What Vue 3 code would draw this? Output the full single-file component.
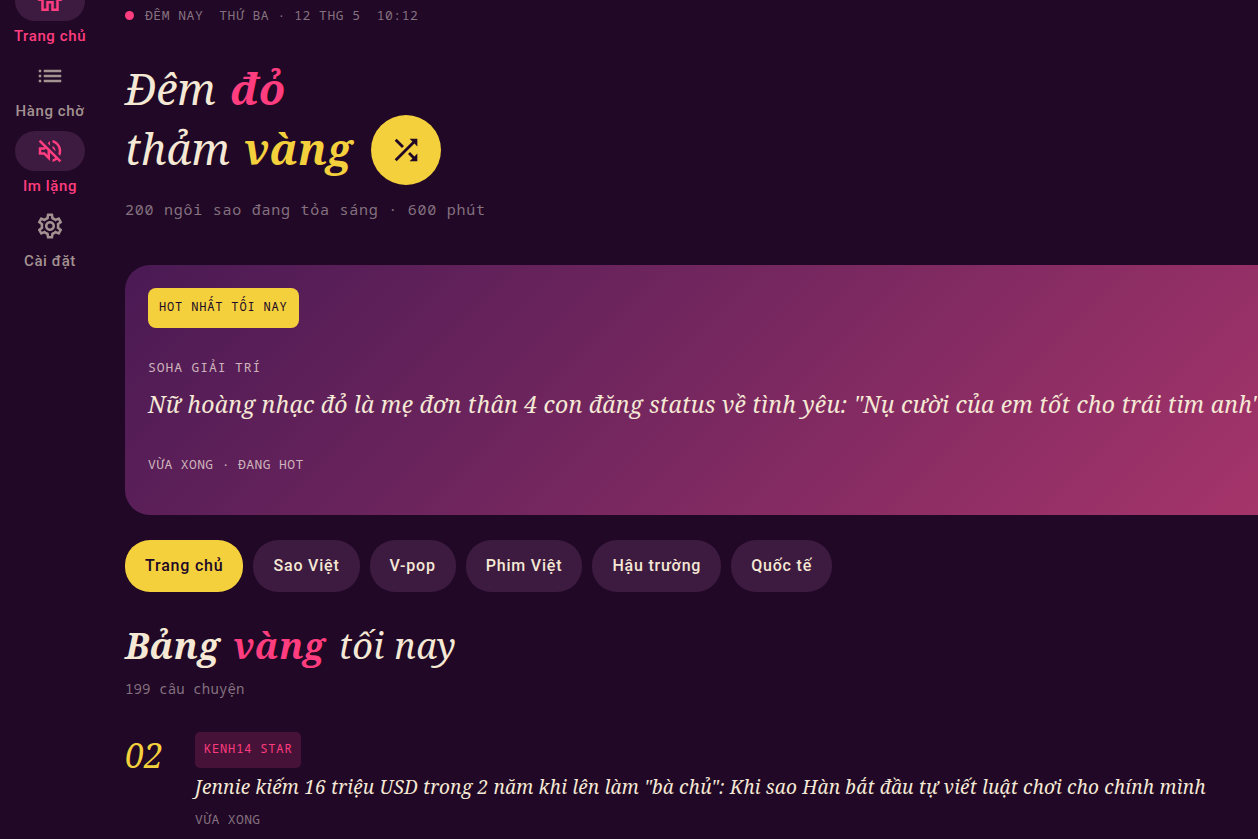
<template>
  <div class="app">
    <nav class="rail" aria-label="Điều hướng">
      <button
        v-for="item in navItems"
        :key="item.label"
        type="button"
        class="rail-item"
        :class="{ active: item.active }"
      >
        <span class="rail-icon">
          <svg viewBox="0 0 24 24" aria-hidden="true"><path :d="item.icon" /></svg>
        </span>
        <span class="rail-label">{{ item.label }}</span>
      </button>
    </nav>

    <main class="content">
      <div class="status">
        <span class="dot"></span>
        <span>ĐÊM NAY</span>
        <span>THỨ BA · 12 THG 5</span>
        <span>10:12</span>
      </div>

      <header class="hero">
        <h1>
          <span class="hero-line">Đêm <b class="pink">đỏ</b></span>
          <span class="hero-line">thảm <b class="gold">vàng</b></span>
        </h1>
        <button type="button" class="shuffle" aria-label="Phát ngẫu nhiên">
          <svg viewBox="0 0 24 24" aria-hidden="true"><path :d="icons.shuffle" /></svg>
        </button>
      </header>
      <p class="summary">200 ngôi sao đang tỏa sáng · 600 phút</p>

      <article class="feature">
        <span class="badge">HOT NHẤT TỐI NAY</span>
        <span class="source">SOHA GIẢI TRÍ</span>
        <h2>Nữ hoàng nhạc đỏ là mẹ đơn thân 4 con đăng status về tình yêu: "Nụ cười của em tốt cho trái tim anh"</h2>
        <span class="time">VỪA XONG · ĐANG HOT</span>
      </article>

      <div class="chips">
        <button
          v-for="tab in tabs"
          :key="tab"
          type="button"
          class="chip"
          :class="{ selected: tab === activeTab }"
          @click="activeTab = tab"
        >{{ tab }}</button>
      </div>

      <section class="board">
        <h2><b>Bảng</b> <b class="pink">vàng</b> tối nay</h2>
        <p class="count">199 câu chuyện</p>

        <article v-for="story in stories" :key="story.rank" class="story">
          <span class="rank">{{ story.rank }}</span>
          <div class="story-body">
            <span class="tag">{{ story.source }}</span>
            <h3>{{ story.title }}</h3>
            <span class="story-time">{{ story.time }}</span>
          </div>
        </article>
      </section>
    </main>
  </div>
</template>

<script setup>
import { ref } from 'vue'

const icons = {
  home: 'M12 5.69l5 4.5V18h-2v-6H9v6H7v-7.81l5-4.5M12 3L2 12h3v8h6v-6h2v6h6v-8h3L12 3z',
  list: 'M3 13h2v-2H3v2zm0 4h2v-2H3v2zm0-8h2V7H3v2zm4 4h14v-2H7v2zm0 4h14v-2H7v2zM7 7v2h14V7H7z',
  mute: 'M4.34 2.93L2.93 4.34 7.29 8.7 7 9H3v6h4l5 5v-6.59l4.18 4.18c-.65.49-1.38.88-2.18 1.11v2.06c1.34-.3 2.57-.92 3.61-1.75l2.05 2.05 1.41-1.41L4.34 2.93zM10 15.17L7.83 13H5v-2h2.83l.88-.88L10 11.41v3.76zM19 12c0 .82-.15 1.61-.41 2.34l1.53 1.53c.56-1.17.88-2.48.88-3.87 0-4.28-2.99-7.86-7-8.77v2.06c2.89.86 5 3.54 5 6.71zm-7-8l-1.88 1.88L12 7.76V4zm4.5 8c0-1.77-1.02-3.29-2.5-4.03v1.79l2.48 2.48c.01-.08.02-.16.02-.24z',
  settings: 'M19.43 12.98c.04-.32.07-.64.07-.98 0-.34-.03-.66-.07-.98l2.11-1.65c.19-.15.24-.42.12-.64l-2-3.46c-.09-.16-.26-.25-.44-.25-.06 0-.12.01-.17.03l-2.49 1c-.52-.4-1.08-.73-1.69-.98l-.38-2.65C14.46 2.18 14.25 2 14 2h-4c-.25 0-.46.18-.49.42l-.38 2.65c-.61.25-1.17.59-1.69.98l-2.49-1c-.06-.02-.12-.03-.18-.03-.17 0-.34.09-.43.25l-2 3.46c-.13.22-.07.49.12.64l2.11 1.65c-.04.32-.07.65-.07.98 0 .33.03.66.07.98l-2.11 1.65c-.19.15-.24.42-.12.64l2 3.46c.09.16.26.25.44.25.06 0 .12-.01.17-.03l2.49-1c.52.4 1.08.73 1.69.98l.38 2.65c.03.24.24.42.49.42h4c.25 0 .46-.18.49-.42l.38-2.65c.61-.25 1.17-.59 1.69-.98l2.49 1c.06.02.12.03.18.03.17 0 .34-.09.43-.25l2-3.46c.12-.22.07-.49-.12-.64l-2.11-1.65zm-1.98-1.71c.04.31.05.52.05.73 0 .21-.02.43-.05.73l-.14 1.13.89.7 1.08.84-.7 1.21-1.27-.51-1.04-.42-.9.68c-.43.32-.84.56-1.25.73l-1.06.43-.16 1.13-.2 1.35h-1.4l-.19-1.35-.16-1.13-1.06-.43c-.43-.18-.83-.41-1.23-.71l-.91-.7-1.06.43-1.27.51-.7-1.21 1.08-.84.89-.7-.14-1.13c-.03-.31-.05-.54-.05-.74s.02-.43.05-.73l.14-1.13-.89-.7-1.08-.84.7-1.21 1.27.51 1.04.42.9-.68c.43-.32.84-.56 1.25-.73l1.06-.43.16-1.13.2-1.35h1.39l.19 1.35.16 1.13 1.06.43c.43.18.83.41 1.23.71l.91.7 1.06-.43 1.27-.51.7 1.21-1.07.85-.89.7.14 1.13zM12 8c-2.21 0-4 1.79-4 4s1.79 4 4 4 4-1.79 4-4-1.79-4-4-4zm0 6c-1.1 0-2-.9-2-2s.9-2 2-2 2 .9 2 2-.9 2-2 2z',
  shuffle: 'M10.59 9.17L5.41 4 4 5.41l5.17 5.17 1.42-1.41zM14.5 4l2.04 2.04L4 18.59 5.41 20 17.96 7.46 20 9.5V4h-5.5zm.33 9.41l-1.41 1.41 3.13 3.13L14.5 20H20v-5.5l-2.04 2.04-3.13-3.13z',
}

const navItems = [
  { label: 'Trang chủ', icon: icons.home, active: true },
  { label: 'Hàng chờ', icon: icons.list, active: false },
  { label: 'Im lặng', icon: icons.mute, active: true },
  { label: 'Cài đặt', icon: icons.settings, active: false },
]

const tabs = ['Trang chủ', 'Sao Việt', 'V-pop', 'Phim Việt', 'Hậu trường', 'Quốc tế']
const activeTab = ref('Trang chủ')

const stories = [
  {
    rank: '02',
    source: 'KENH14 STAR',
    title: 'Jennie kiếm 16 triệu USD trong 2 năm khi lên làm "bà chủ": Khi sao Hàn bắt đầu tự viết luật chơi cho chính mình',
    time: 'VỪA XONG',
  },
]
</script>

<style>
body {
  background: #200826;
  overflow: hidden;
}
</style>

<style scoped>
.app {
  --cream: #f5e8d5;
  --pink: #ff3d7f;
  --gold: #f5d03d;
  --plum: #3d1a40;
  --muted: #85717f;
  --serif: 'Noto Serif', 'Droid Serif', 'Liberation Serif', serif;
  --mono: 'Noto Sans Mono', 'Droid Sans Mono', 'DejaVu Sans Mono', monospace;
  display: flex;
  min-height: 100vh;
  overflow: hidden;
  background: #200826;
  color: var(--cream);
  font-family: Roboto, 'Liberation Sans', sans-serif;
}

button {
  border: 0;
  font: inherit;
  cursor: pointer;
}

h1,
h2,
h3,
p {
  margin: 0;
  font-weight: 400;
}

svg {
  display: block;
  fill: currentColor;
}

.pink {
  color: var(--pink);
}

.gold {
  color: var(--gold);
}

/* the rail is scrolled a little under the top edge */
.rail {
  flex: none;
  width: 100px;
  margin-top: -19px;
  display: flex;
  flex-direction: column;
  align-items: center;
}

.rail-item {
  height: 75px;
  padding: 0;
  display: flex;
  flex-direction: column;
  align-items: center;
  gap: 5px;
  background: none;
  color: #a39291;
}

.rail-item.active {
  color: var(--pink);
}

.rail-icon {
  width: 70px;
  height: 40px;
  display: grid;
  place-items: center;
  border-radius: 20px;
}

.active .rail-icon {
  background: var(--plum);
}

.rail-icon svg {
  width: 30px;
  height: 30px;
}

.rail-label {
  font-size: 15px;
  font-weight: 500;
  line-height: 20px;
  letter-spacing: 0.04em;
}

.content {
  flex: 1;
  min-width: 0;
  padding: 5px 0 0 25px;
}

.status {
  display: flex;
  align-items: center;
  gap: 16px;
  font-family: var(--mono);
  font-size: 13px;
  line-height: 20px;
  letter-spacing: 0.04em;
  color: var(--muted);
}

.dot {
  width: 9px;
  height: 9px;
  margin-right: -5px;
  border-radius: 50%;
  background: var(--pink);
}

.hero {
  margin-top: 34px;
  display: flex;
  align-items: flex-end;
  gap: 19px;
  font-family: var(--serif);
  font-style: italic;
}

.hero h1 {
  font-size: 43px;
  line-height: 60px;
}

.hero-line {
  display: block;
}

.hero b {
  margin-left: 3px;
}

.shuffle {
  width: 70px;
  height: 70px;
  padding: 0;
  margin-bottom: -6px;
  display: grid;
  place-items: center;
  border-radius: 50%;
  background: var(--gold);
  color: #200826;
}

.shuffle svg {
  width: 34px;
  height: 34px;
}

.summary {
  margin-top: 20px;
  font-family: var(--mono);
  font-size: 15px;
  line-height: 20px;
  letter-spacing: 0.05em;
  color: var(--muted);
}

.feature {
  height: 204px;
  margin: 46px -24px 0 0;
  padding: 23px;
  display: flex;
  flex-direction: column;
  align-items: flex-start;
  border-radius: 25px;
  background: linear-gradient(135deg, #4a1a54, #a6356b);
  white-space: nowrap;
}

.badge {
  padding: 0 11px 2px;
  border-radius: 8px;
  background: var(--gold);
  color: #200826;
  font-family: var(--mono);
  font-size: 12px;
  line-height: 38px;
  letter-spacing: 0.07em;
}

.source,
.time {
  font-family: var(--mono);
  font-size: 13px;
  line-height: 20px;
  color: #cdb3bb;
}

.source {
  margin-top: 29px;
  letter-spacing: 0.07em;
}

.feature h2 {
  margin-top: 10px;
  font-family: var(--serif);
  font-size: 23px;
  font-style: italic;
  line-height: 34px;
  letter-spacing: 0.01em;
}

.time {
  margin-top: 33px;
  letter-spacing: 0.03em;
}

.chips {
  margin-top: 25px;
  display: flex;
  gap: 10px;
}

.chip {
  padding: 0 20px;
  border-radius: 25px;
  background: var(--plum);
  color: var(--cream);
  font-size: 16px;
  font-weight: 500;
  line-height: 52px;
  letter-spacing: 0.05em;
}

.chip.selected {
  background: var(--gold);
  color: #200826;
}

.board {
  margin-top: 29px;
}

.board h2 {
  font-family: var(--serif);
  font-size: 36px;
  font-style: italic;
  line-height: 50px;
  letter-spacing: 0.01em;
}

.board b {
  margin-right: 4px;
}

.count {
  margin-top: 8px;
  font-family: var(--mono);
  font-size: 14px;
  line-height: 20px;
  letter-spacing: 0.01em;
  color: var(--muted);
}

.story {
  margin-top: 33px;
  display: flex;
}

.rank {
  flex: none;
  width: 70px;
  font-family: var(--serif);
  font-size: 34px;
  font-style: italic;
  line-height: 46px;
  color: var(--gold);
}

.story-body {
  display: flex;
  flex-direction: column;
  align-items: flex-start;
}

.tag {
  padding: 0 9px 2px;
  border-radius: 5px;
  background: #471238;
  color: var(--pink);
  font-family: var(--mono);
  font-size: 12px;
  line-height: 34px;
  letter-spacing: 0.07em;
}

.story h3 {
  margin-top: 5px;
  font-family: var(--serif);
  font-size: 19px;
  font-style: italic;
  line-height: 28px;
  letter-spacing: 0.01em;
}

.story-time {
  margin-top: 8px;
  font-family: var(--mono);
  font-size: 13px;
  line-height: 20px;
  letter-spacing: 0.03em;
  color: var(--muted);
}
</style>
